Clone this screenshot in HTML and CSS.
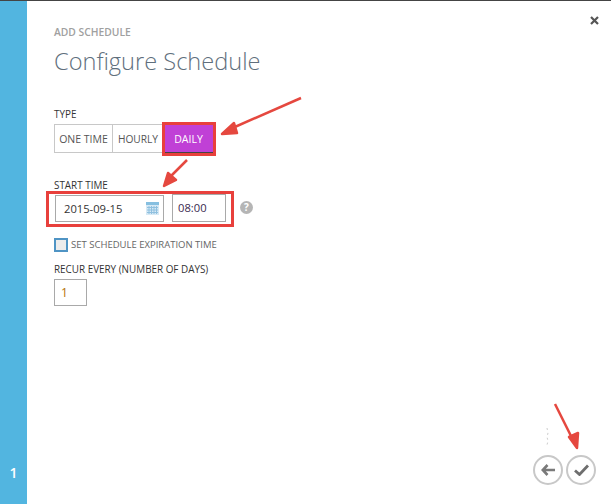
FILE: index.html
```html
<!DOCTYPE html>
<html lang="en">
<head>
<meta charset="utf-8">
<title>Configure Schedule</title>
<link rel="stylesheet" href="styles.css">
</head>
<body>
<div class="dialog">
  <aside class="rail"><span class="step">1</span></aside>
  <main class="content">
    <div class="eyebrow">ADD SCHEDULE</div>
    <h1 class="title">Configure Schedule</h1>

    <div class="label type-label">TYPE</div>
    <div class="segments">
      <div class="seg seg-one">ONE TIME</div>
      <div class="seg seg-hourly">HOURLY</div>
      <div class="seg seg-daily">DAILY</div>
    </div>

    <div class="label start-label">START TIME</div>
    <div class="time-row">
      <div class="field date-field">
        <span>2015-09-15</span>
        <svg class="cal" width="13" height="13" viewBox="0 0 13 13">
          <rect x="0" y="0" width="13" height="13" fill="#d6e9f5"/>
          <rect x="0" y="0" width="13" height="3" fill="#86bfe0"/>
          <path d="M1 5.5H12M1 8H12M1 10.5H12M3 4V12M5.5 4V12M8 4V12M10.5 4V12" stroke="#8fc0df" stroke-width="1" fill="none"/>
        </svg>
      </div>
      <div class="field time-field">08:00</div>
      <div class="help">?</div>
    </div>

    <div class="check-row">
      <span class="checkbox"></span>
      <span class="check-text">SET SCHEDULE EXPIRATION TIME</span>
    </div>

    <div class="label recur-label">RECUR EVERY (NUMBER OF DAYS)</div>
    <div class="field recur-field">1</div>

    <div class="nav">
      <div class="nav-btn">
        <svg width="14" height="12" viewBox="0 0 14 12"><path d="M6.5 1L1.8 6L6.5 11M2.5 6H14" fill="none" stroke="#7a7a7a" stroke-width="2.6"/></svg>
      </div>
      <div class="nav-btn">
        <svg width="15" height="12" viewBox="0 0 15 12"><path d="M1 6.5L5.5 10.5L14 1.5" fill="none" stroke="#6e6e6e" stroke-width="2.8"/></svg>
      </div>
    </div>
  </main>

  <svg class="close" width="9" height="9" viewBox="0 0 9 9"><path d="M1 1L8 8M8 1L1 8" stroke="#555" stroke-width="2.2"/></svg>

  <svg class="overlay" width="611" height="504" viewBox="0 0 611 504">
    <rect class="mark" x="163.5" y="123.5" width="51" height="31"/>
    <rect class="mark" x="47.5" y="192.5" width="185" height="33"/>
    <path class="speck" d="M547 428L548 433L547 437L548 441L547 445"/>
    <g class="arrow">
      <path d="M301 98L228 130"/><path d="M222 134L234 123L237 133Z"/>
      <path d="M187 160L168 179"/><path d="M164 186L168 173L176 180Z"/>
      <path d="M555 404L574 442"/><path d="M577 448L569 437L578 433Z"/>
    </g>
  </svg>
</div>
</body>
</html>
```

FILE: styles.css
```css
* { box-sizing: border-box; }
html, body { margin: 0; padding: 0; }
body { background: #fff; font-family: "Open Sans", "Noto Sans", sans-serif; color: #333; }
.dialog {
  position: relative;
  display: flex;
  width: 611px;
  height: 504px;
  overflow: hidden;
  border-top: 1px solid #444;
}
.rail {
  width: 27px;
  flex: none;
  background: #52b5e0;
  display: flex;
  flex-direction: column;
  justify-content: flex-end;
  align-items: center;
  padding-bottom: 21px;
}
.step { color: #fff; font-size: 14px; font-weight: 600; line-height: 20px; }
.content {
  flex: 1;
  padding: 25px 0 0 27px;
  display: flex;
  flex-direction: column;
  align-items: flex-start;
}
.eyebrow { font-size: 10.3px; font-weight: 600; line-height: 12px; color: #a0a0a0; }
.title {
  margin: 6px 0 0;
  font-size: 23.6px;
  font-weight: 300;
  line-height: 34px;
  color: #5f6f7d;
}
.label { font-size: 9.9px; line-height: 12px; color: #333; }
.type-label { margin-top: 30px; }
.segments { display: flex; margin-top: 4px; height: 29px; }
.seg {
  font-size: 10.5px;
  line-height: 29px;
  color: #555;
  border: 1px solid #c8c8c8;
  text-align: center;
}
.seg-one { width: 59px; }
.seg-hourly { width: 52px; padding-right: 2px; border-left: 0; border-right: 0; font-size: 10.2px; }
.seg-daily {
  width: 49px;
  padding-right: 2px;
  background: #c040d6;
  border: 0;
  border-bottom: 1px solid #444;
  color: #fff;
  font-weight: 500;
  line-height: 31px;
}
.start-label { margin-top: 26px; }
.time-row { display: flex; align-items: flex-end; margin-top: 3px; height: 28px; }
.field {
  border: 1px solid #a9a9a9;
  font-size: 11.2px;
  color: #333;
  background: #fff;
}
.date-field {
  width: 109px;
  height: 27px;
  margin-left: 1px;
  padding: 0 4px 0 8px;
  display: flex;
  align-items: center;
  justify-content: space-between;
}
.time-field { width: 54px; height: 28px; margin-left: 8px; padding-left: 5px; line-height: 26px; color: #3a2a50; }
.help {
  width: 13px;
  height: 13px;
  margin: 0 0 8px 14px;
  border-radius: 50%;
  background: #b5b5b5;
  color: #fff;
  font-size: 10px;
  font-weight: 700;
  line-height: 13px;
  text-align: center;
}
.check-row { display: flex; align-items: center; margin-top: 15px; height: 15px; }
.checkbox { width: 14px; height: 14px; border: 2px solid #4f94c4; background: #ececec; }
.check-text { margin-left: 3px; font-size: 9.5px; color: #666; }
.recur-label { margin-top: 11px; }
.recur-field { width: 33px; height: 27px; margin-top: 4px; padding-left: 6px; line-height: 25px; color: #b5730a; font-size: 12px; }
.nav {
  position: absolute;
  right: 15px;
  bottom: 19px;
  display: flex;
  gap: 3px;
}
.nav-btn {
  width: 30px;
  height: 30px;
  border: 2px solid #c8c8c8;
  border-radius: 50%;
  display: flex;
  align-items: center;
  justify-content: center;
}
.close { position: absolute; left: 590px; top: 15px; }
.overlay { position: absolute; left: 0; top: -1px; pointer-events: none; }
.mark { fill: none; stroke: #e8403c; stroke-width: 3; }
.speck { fill: none; stroke: #ccc; stroke-width: 1; stroke-dasharray: 2 3; }
.arrow path { stroke: #e5483f; stroke-width: 2.5; fill: #e5483f; stroke-linejoin: round; }
```
